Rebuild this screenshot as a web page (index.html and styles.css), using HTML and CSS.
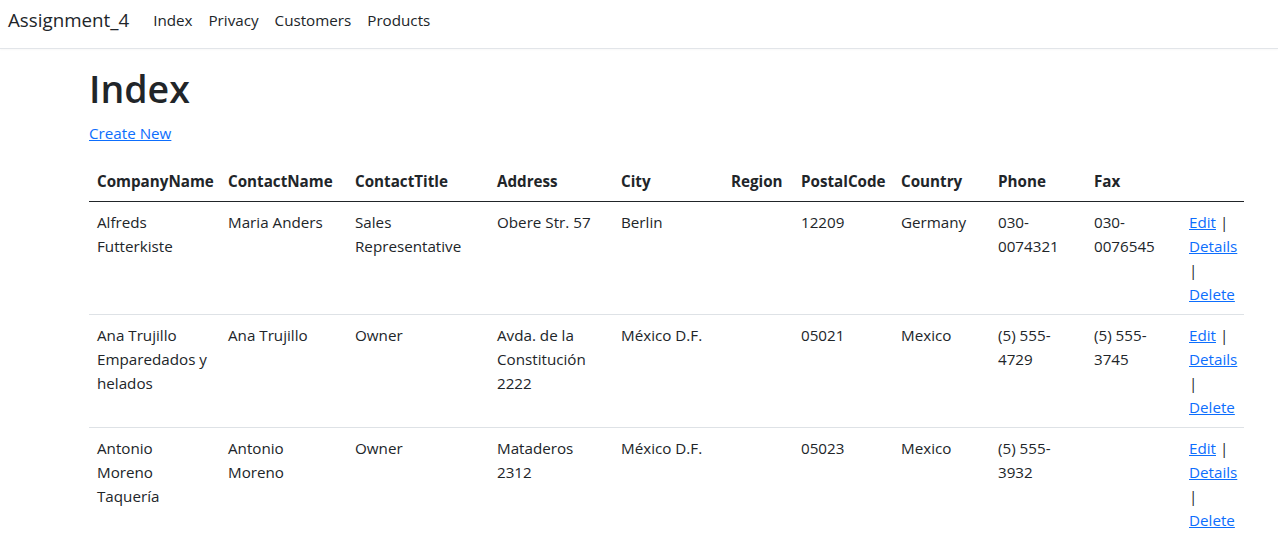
FILE: index.html
```html
<!DOCTYPE html>
<html lang="en">
<head>
<meta charset="utf-8">
<title>Index - Assignment_4</title>
<link rel="stylesheet" href="styles.css">
</head>
<body>
<header class="navbar">
  <a class="brand" href="#">Assignment_4</a>
  <nav class="nav">
    <a class="nav-link" href="#">Index</a>
    <a class="nav-link" href="#">Privacy</a>
    <a class="nav-link" href="#">Customers</a>
    <a class="nav-link" href="#">Products</a>
  </nav>
</header>
<main class="container">
  <h1 class="title">Index</h1>
  <p class="create"><a href="#">Create New</a></p>
  <table class="table">
    <colgroup>
      <col class="c1"><col class="c2"><col class="c3"><col class="c4"><col class="c5"><col class="c6"><col class="c7"><col class="c8"><col class="c9"><col class="c10"><col class="c11">
    </colgroup>
    <thead>
      <tr>
        <th>CompanyName</th><th>ContactName</th><th>ContactTitle</th><th>Address</th><th>City</th><th>Region</th><th>PostalCode</th><th>Country</th><th>Phone</th><th>Fax</th><th></th>
      </tr>
    </thead>
    <tbody>
      <tr>
        <td>Alfreds Futterkiste</td><td>Maria Anders</td><td>Sales Representative</td><td>Obere Str. 57</td><td>Berlin</td><td></td><td>12209</td><td>Germany</td><td>030-0074321</td><td>030-0076545</td>
        <td><a href="#">Edit</a> | <a href="#">Details</a> | <a href="#">Delete</a></td>
      </tr>
      <tr>
        <td>Ana Trujillo Emparedados y helados</td><td>Ana Trujillo</td><td>Owner</td><td>Avda. de la Constitución 2222</td><td>México D.F.</td><td></td><td>05021</td><td>Mexico</td><td>(5) 555-4729</td><td>(5) 555-3745</td>
        <td><a href="#">Edit</a> | <a href="#">Details</a> | <a href="#">Delete</a></td>
      </tr>
      <tr>
        <td>Antonio Moreno Taquería</td><td>Antonio Moreno</td><td>Owner</td><td>Mataderos 2312</td><td>México D.F.</td><td></td><td>05023</td><td>Mexico</td><td>(5) 555-3932</td><td></td>
        <td><a href="#">Edit</a> | <a href="#">Details</a> | <a href="#">Delete</a></td>
      </tr>
    </tbody>
  </table>
</main>
</body>
</html>
```

FILE: styles.css
```css
html, body {
  margin: 0;
  padding: 0;
  background: #fff;
}
body {
  font-family: "Segoe UI", "Open Sans", "Noto Sans", Arial, sans-serif;
  font-size: 15.2px;
  line-height: 24px;
  color: #212529;
}
a {
  color: #0d6efd;
  text-decoration: underline;
}
.navbar {
  display: flex;
  align-items: center;
  padding: 5px 8px 13px;
  border-bottom: 1px solid #e2e5e9;
  box-shadow: 0 1px 2px rgba(0,0,0,0.03);
}
.brand {
  font-size: 18.75px;
  line-height: 30px;
  color: #212529;
  text-decoration: none;
  margin-right: 16px;
}
.nav {
  display: flex;
}
.nav-link {
  padding: 0 8px;
  color: #212529;
  text-decoration: none;
  line-height: 24px;
}
.container {
  padding: 16px 34px 16px 89px;
}
.title {
  font-size: 37.5px;
  font-weight: 600;
  line-height: 48px;
  margin: 0 0 8px;
}
.create {
  margin: 0 0 16px;
}
.table {
  width: 1155px;
  table-layout: fixed;
  border-collapse: collapse;
}
.c1 { width: 131px; }
.c2 { width: 127px; }
.c3 { width: 142px; }
.c4 { width: 124px; }
.c5 { width: 110px; }
.c6 { width: 70px; }
.c7 { width: 100px; }
.c8 { width: 97px; }
.c9 { width: 96px; }
.c10 { width: 95px; }
.c11 { width: 63px; }
.table th {
  text-align: left;
  font-weight: 700;
  white-space: nowrap;
  padding: 8px;
  border-bottom: 1px solid #212529;
}
.table td {
  padding: 8px;
  vertical-align: top;
  border-bottom: 1px solid #dee2e6;
}
.table tbody tr:first-child td {
  border-top: 1px solid #212529;
}
```
